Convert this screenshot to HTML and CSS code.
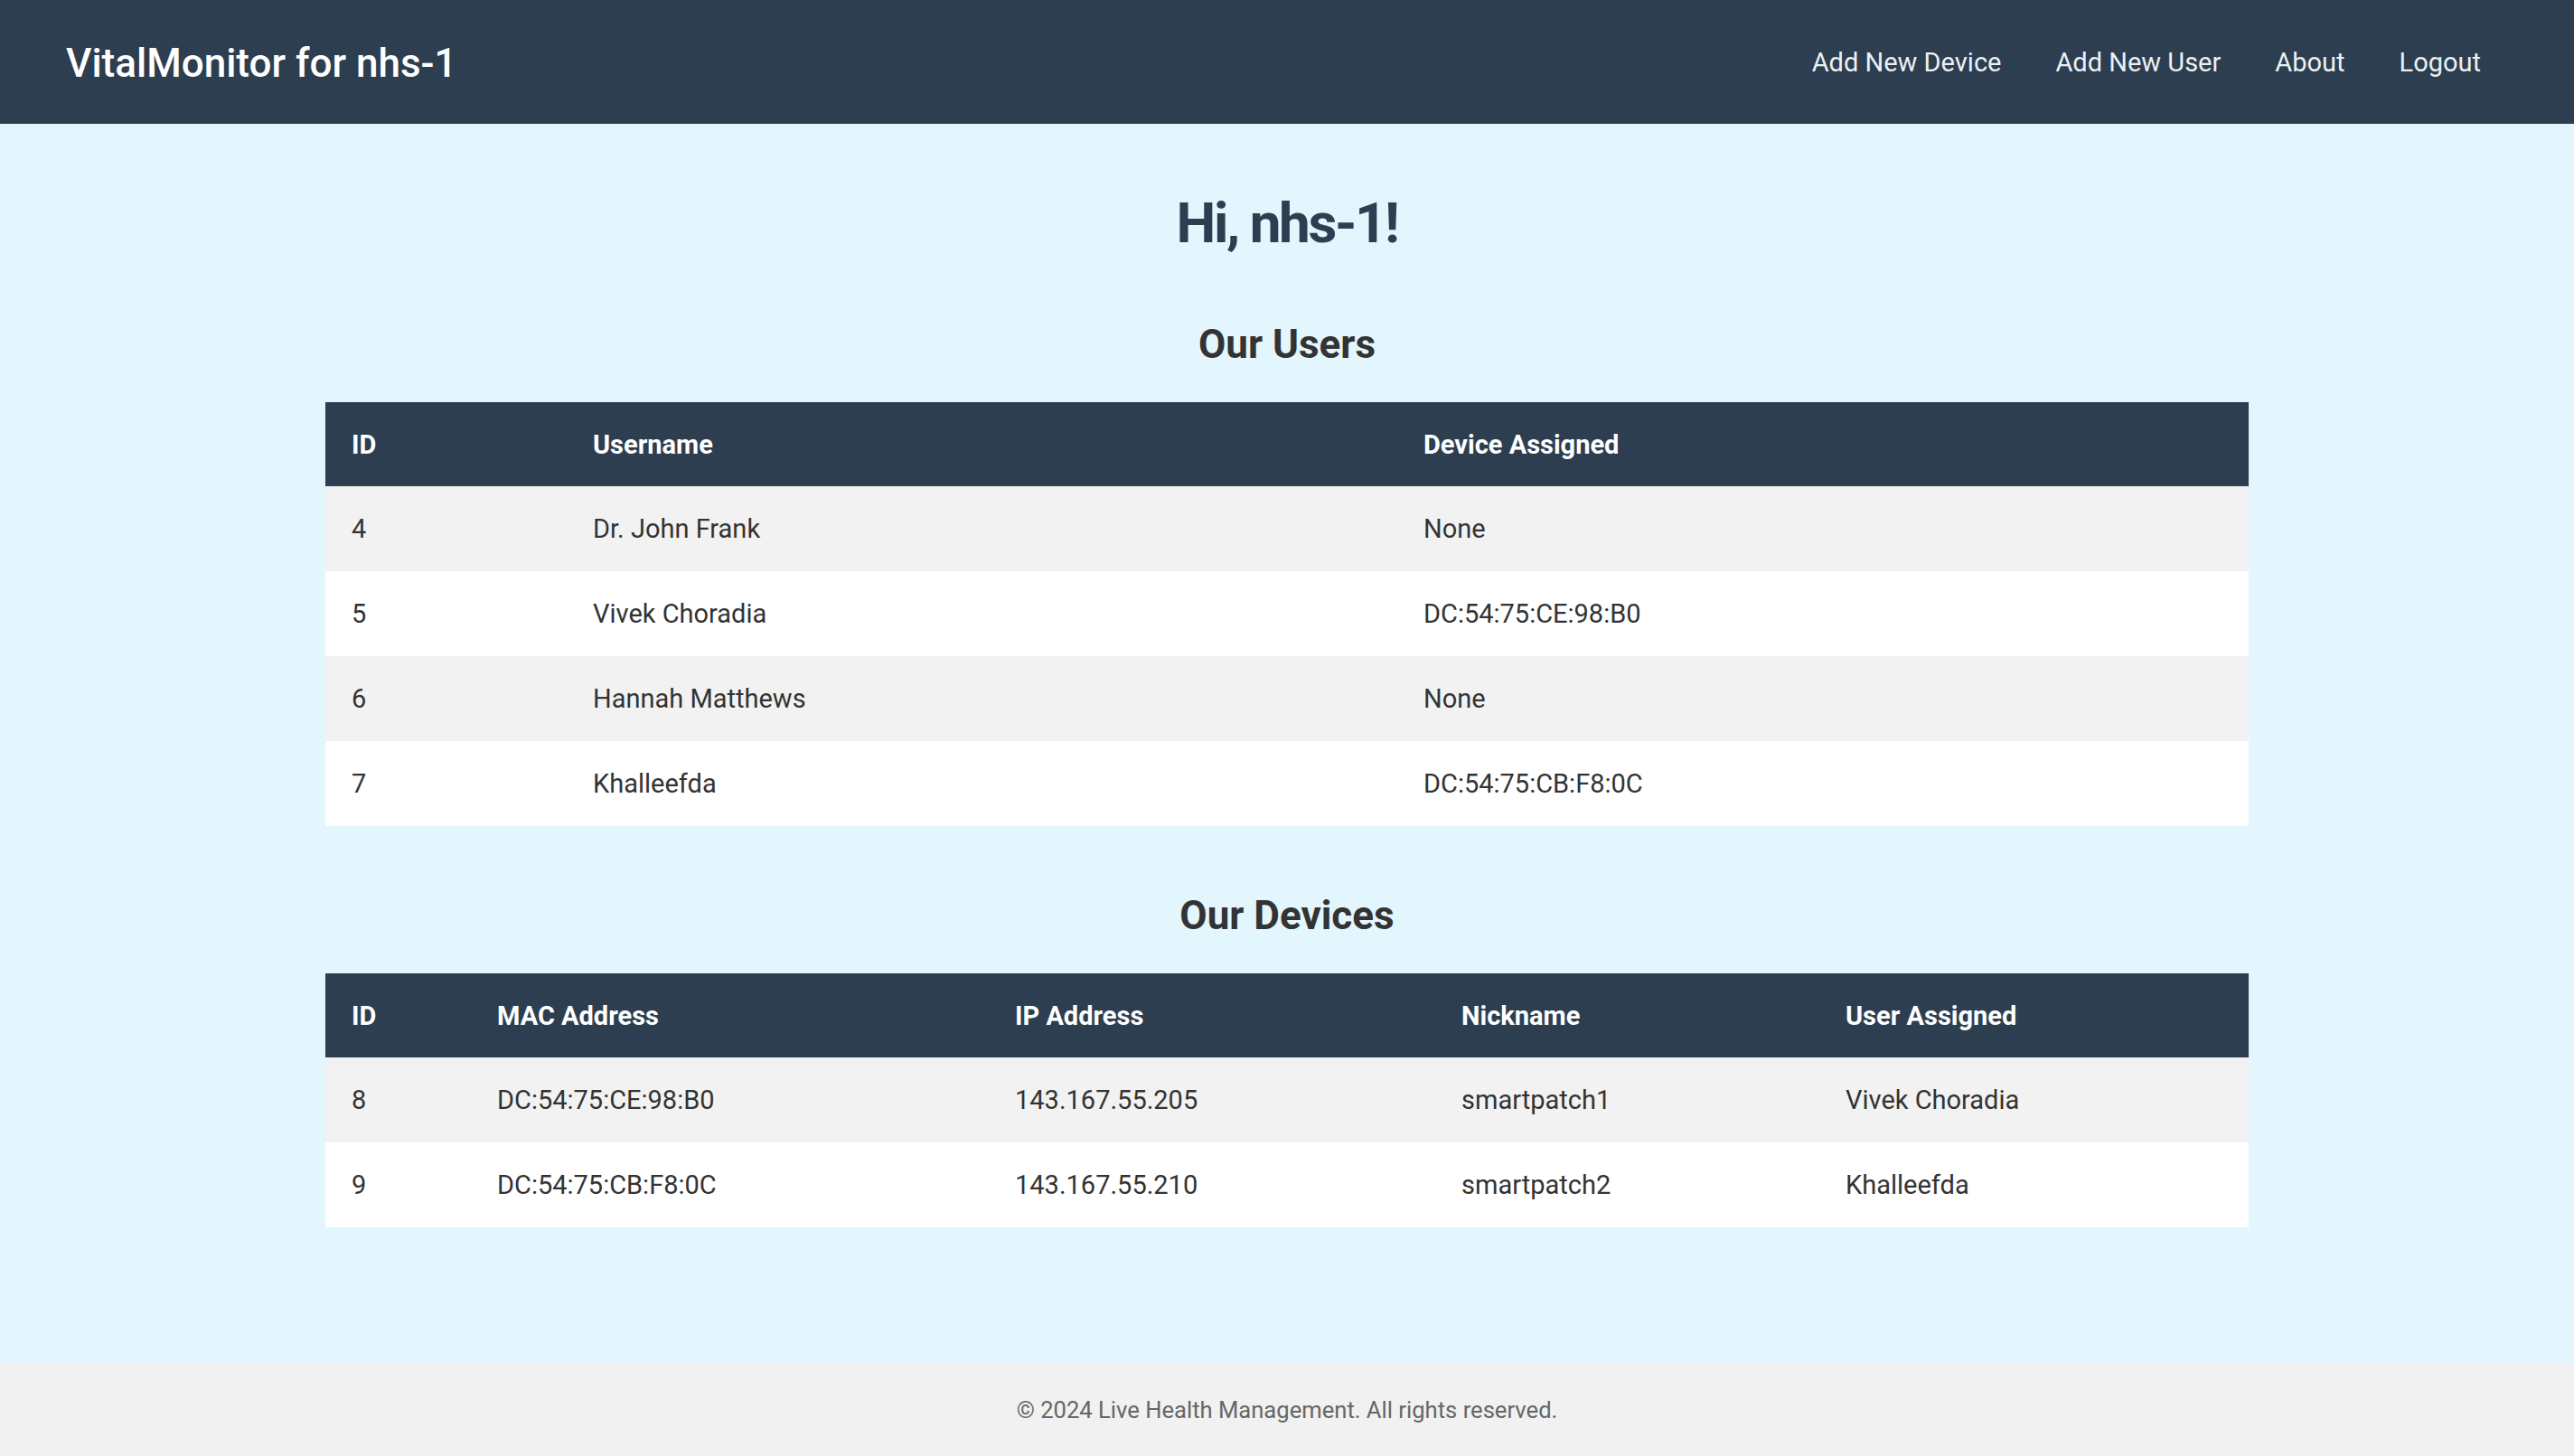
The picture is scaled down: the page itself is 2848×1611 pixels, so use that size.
FILE: index.html
```html
<!DOCTYPE html>
<html lang="en">
<head>
<meta charset="utf-8">
<title>VitalMonitor for nhs-1</title>
<link rel="stylesheet" href="styles.css">
</head>
<body>
<header class="topbar">
  <div class="brand">VitalMonitor for nhs-1</div>
  <nav class="nav">
    <a href="#">Add New Device</a>
    <a href="#">Add New User</a>
    <a href="#">About</a>
    <a href="#">Logout</a>
  </nav>
</header>
<main class="content">
  <h1 class="greeting">Hi, nhs-1!</h1>
  <h2 class="section-title">Our Users</h2>
  <table class="data-table">
    <colgroup>
      <col class="u-id"><col class="u-name"><col class="u-dev">
    </colgroup>
    <thead>
      <tr><th>ID</th><th>Username</th><th>Device Assigned</th></tr>
    </thead>
    <tbody>
      <tr><td>4</td><td>Dr. John Frank</td><td>None</td></tr>
      <tr><td>5</td><td>Vivek Choradia</td><td>DC:54:75:CE:98:B0</td></tr>
      <tr><td>6</td><td>Hannah Matthews</td><td>None</td></tr>
      <tr><td>7</td><td>Khalleefda</td><td>DC:54:75:CB:F8:0C</td></tr>
    </tbody>
  </table>
  <h2 class="section-title second">Our Devices</h2>
  <table class="data-table">
    <colgroup>
      <col class="d-id"><col class="d-mac"><col class="d-ip"><col class="d-nick"><col class="d-user">
    </colgroup>
    <thead>
      <tr><th>ID</th><th>MAC Address</th><th>IP Address</th><th>Nickname</th><th>User Assigned</th></tr>
    </thead>
    <tbody>
      <tr><td>8</td><td>DC:54:75:CE:98:B0</td><td>143.167.55.205</td><td>smartpatch1</td><td>Vivek Choradia</td></tr>
      <tr><td>9</td><td>DC:54:75:CB:F8:0C</td><td>143.167.55.210</td><td>smartpatch2</td><td>Khalleefda</td></tr>
    </tbody>
  </table>
</main>
<footer class="footer">
  <p>&copy; 2024 Live Health Management. All rights reserved.</p>
</footer>
</body>
</html>
```

FILE: styles.css
```css
* { box-sizing: border-box; }

html, body {
  margin: 0;
  padding: 0;
}

body {
  font-family: Roboto, "Liberation Sans", Arial, sans-serif;
  background: #e3f5fd;
  color: #333;
}

.topbar {
  height: 137px;
  background: #2c3e50;
  display: flex;
  align-items: center;
  justify-content: space-between;
  padding: 0 103px 0 73px;
}

.brand {
  color: #ffffff;
  font-size: 44px;
  font-weight: 500;
  line-height: 52px;
  padding-top: 2px;
}

.nav {
  display: flex;
  gap: 60px;
}

.nav a {
  color: #ecf0f1;
  text-decoration: none;
  font-size: 29px;
  line-height: 34px;
}

.content {
  padding: 72px 0 150px;
  display: flex;
  flex-direction: column;
  align-items: center;
}

.greeting {
  margin: 0 0 70px;
  font-size: 62px;
  line-height: 76px;
  font-weight: 700;
  letter-spacing: -2.4px;
  color: #2c3e50;
}

.section-title {
  margin: 0 0 37px;
  font-size: 44px;
  line-height: 53px;
  font-weight: 700;
  color: #333;
}

.section-title.second {
  margin-top: 73px;
}

.data-table {
  width: 2128px;
  border-collapse: collapse;
  table-layout: fixed;
  font-size: 29px;
}

.data-table th,
.data-table td {
  padding: 0 29px;
  text-align: left;
  white-space: nowrap;
}

.data-table th {
  height: 93px;
  background: #2c3e50;
  color: #ffffff;
  font-weight: 700;
}

.data-table td {
  height: 94px;
  color: #333;
}

.data-table tbody tr:nth-child(odd) { background: #f2f2f2; }
.data-table tbody tr:nth-child(even) { background: #ffffff; }

.u-id { width: 267px; }
.u-name { width: 919px; }
.u-dev { width: 942px; }

.d-id { width: 161px; }
.d-mac { width: 573px; }
.d-ip { width: 494px; }
.d-nick { width: 425px; }
.d-user { width: 475px; }

.footer {
  height: 104px;
  background: #f1f1f1;
  display: flex;
  align-items: center;
  justify-content: center;
}

.footer p {
  margin: 0;
  font-size: 25.6px;
  color: #666;
}
```
